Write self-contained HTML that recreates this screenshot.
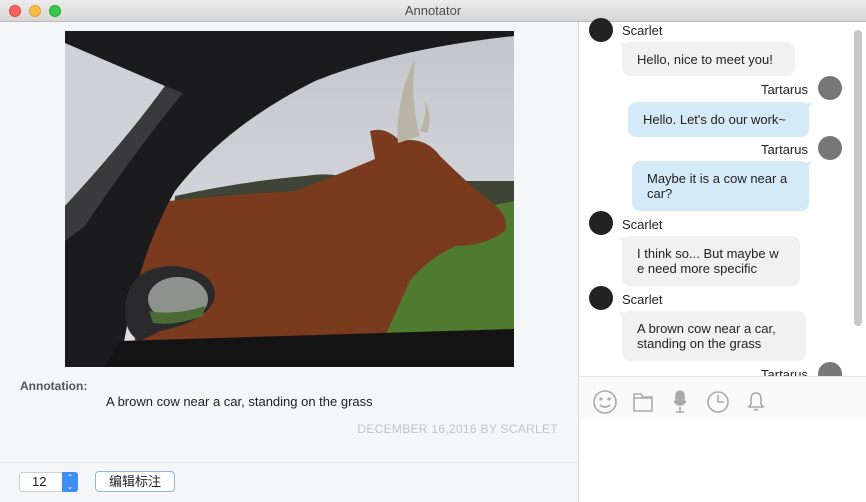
<!DOCTYPE html>
<html><head><meta charset="utf-8"><style>
*{margin:0;padding:0;box-sizing:border-box}
body{width:866px;height:502px;overflow:hidden;font-family:"Liberation Sans","Noto Sans CJK SC",sans-serif;background:#f5f6f8;position:relative;font-size:13px;color:#222}
.tb{position:absolute;left:0;top:0;width:866px;height:22px;background:linear-gradient(#ececec,#d6d6d6);border-bottom:1px solid #b9b9b9;text-align:center;line-height:22px;font-size:13px;color:#4d4d4d}
.dot{position:absolute;top:5px;width:12px;height:12px;border-radius:50%}
.left{position:absolute;left:0;top:22px;width:578px;height:480px;background:#f5f6f8}
.right{position:absolute;left:578px;top:22px;width:288px;height:480px;background:#fff;border-left:1px solid #ddd}
.av{position:absolute;width:24px;height:24px;border-radius:50%}
.nm{position:absolute;font-size:13px;color:#222}
.b{position:absolute;border-radius:8px;padding:0 15px;font-size:13px;line-height:15px;display:flex;align-items:center;word-break:break-all}
.g{background:#f1f1f1}.bl{background:#d4ebf7}
.g::before{content:"";position:absolute;left:-1px;top:-3px;border:5px solid transparent;border-left-color:#f1f1f1;transform:rotate(-30deg)}
.bl::before{content:"";position:absolute;right:-1px;top:-3px;border:5px solid transparent;border-right-color:#d4ebf7;transform:rotate(30deg)}
</style></head><body>
<div class="tb">Annotator
<div class="dot" style="left:9px;background:#fc605c;border:1px solid #de4a43"></div>
<div class="dot" style="left:29px;background:#fdbc40;border:1px solid #dea235"></div>
<div class="dot" style="left:49px;background:#34c84a;border:1px solid #27aa35"></div>
</div>
<div class="left">
<svg style="position:absolute;left:65px;top:9px" width="449" height="336" viewBox="0 0 449 336">
<defs><linearGradient id="sky" x1="0" y1="0" x2="0" y2="1"><stop offset="0" stop-color="#c4c6cc"/><stop offset="1" stop-color="#dfe0e4"/></linearGradient></defs>
<rect width="449" height="336" fill="url(#sky)"/>
<path d="M110 165 Q180 150 240 145 Q270 140 290 150 L449 150 L449 336 L100 336Z" fill="#3e4536"/>
<path d="M300 200 L449 170 L449 300 L300 310Z" fill="#4f7a30"/>
<path d="M60 175 Q140 165 230 160 Q270 145 310 128 L305 100 Q320 95 335 110 Q360 105 375 125 Q400 150 425 170 Q445 185 440 200 Q420 215 390 215 Q360 230 345 250 L320 305 L70 310 Z" fill="#7a3a1e"/>
<path d="M333 112 Q330 70 350 28 Q345 70 355 105Z" fill="#b8b5a6"/>
<path d="M355 100 Q362 85 360 70 Q368 85 362 102Z" fill="#b8b5a6"/>
<path d="M0 0 L449 0 L449 5 Q330 18 250 50 Q160 95 110 160 Q70 230 55 336 L0 336Z" fill="#1b1b1e"/>
<path d="M0 12 L100 55 Q60 110 0 175Z" fill="#cfd1d6"/>
<path d="M100 55 L118 62 Q70 120 20 195 L0 210 L0 175 Q60 110 100 55Z" fill="#3a3a3d"/>
<path d="M62 265 Q70 235 110 235 Q150 240 150 265 Q145 290 95 300 L75 310 Q55 300 62 265Z" fill="#2a2a2c"/>
<ellipse cx="113" cy="268" rx="30" ry="22" fill="#8d928e"/>
<path d="M84 280 Q110 285 140 275 L138 285 Q110 295 88 292Z" fill="#4c6a33"/>
<path d="M40 336 L55 310 L449 298 L449 336Z" fill="#141414"/>
</svg>
<div style="position:absolute;left:20px;top:357px;font-size:12px;font-weight:bold;color:#555">Annotation:</div>
<div style="position:absolute;left:106px;top:372px;font-size:13px">A brown cow near a car, standing on the grass</div>
<div style="position:absolute;right:20px;top:400px;font-size:12px;color:#c4c4c4;letter-spacing:.3px">DECEMBER 16,2016 BY SCARLET</div>
<div style="position:absolute;left:0;top:440px;width:578px;border-top:1px solid #e3e3e3"></div>
<div style="position:absolute;left:19px;top:450px;width:59px;height:20px;background:#fff;border:1px solid #cfcfcf;border-radius:3px;font-size:13px;line-height:18px;padding-left:12px">12
<div style="position:absolute;right:-1px;top:-1px;width:16px;height:20px;background:#3d8ef5;border-radius:0 3px 3px 0;color:#fff;font-size:8px;line-height:9px;text-align:center;padding-top:1px">⌃<br>⌄</div></div>
<div style="position:absolute;left:95px;top:449px;width:80px;height:21px;background:#fff;border:1px solid #8bb3e8;border-radius:4px;font-size:13px;line-height:19px;text-align:center">编辑标注</div>
</div>
<div class="right">
<div style="position:absolute;left:275px;top:8px;width:8px;height:296px;background:#c8c8c8;border-radius:4px"></div>
<div class="av" style="left:10px;top:-4px;background:#222"></div><div class="nm" style="left:43px;top:1px">Scarlet</div>
<div class="b g" style="left:43px;top:20px;width:173px;height:34px">Hello, nice to meet you!</div>
<div class="av" style="left:239px;top:54px;background:#777"></div><div class="nm" style="right:58px;top:60px">Tartarus</div>
<div class="b bl" style="left:49px;top:80px;width:181px;height:35px">Hello. Let's do our work~</div>
<div class="av" style="left:239px;top:114px;background:#777"></div><div class="nm" style="right:58px;top:120px">Tartarus</div>
<div class="b bl" style="left:53px;top:139px;width:177px;height:50px">Maybe it is a cow near a car?</div>
<div class="av" style="left:10px;top:189px;background:#222"></div><div class="nm" style="left:43px;top:195px">Scarlet</div>
<div class="b g" style="left:43px;top:214px;width:178px;height:50px">I think so... But maybe we need more specific</div>
<div class="av" style="left:10px;top:264px;background:#222"></div><div class="nm" style="left:43px;top:270px">Scarlet</div>
<div class="b g" style="left:43px;top:289px;width:184px;height:50px;padding-right:22px">A brown cow near a car, standing on the grass</div>
<div class="av" style="left:239px;top:340px;background:#777"></div><div class="nm" style="right:58px;top:345px">Tartarus</div>
<div style="position:absolute;left:0;top:354px;width:288px;height:44px;background:#fafafa;border-top:1px solid #e3e3e3">
<svg width="288" height="44" fill="none" stroke="#aaa" stroke-width="1.6">
<circle cx="26" cy="25" r="11"/><circle cx="22" cy="22" r=".8" fill="#aaa"/><circle cx="30" cy="22" r=".8" fill="#aaa"/><path d="M21 28 Q26 32 31 28"/>
<path d="M55 17 H62 L64 20 H73 V34 H55Z M55 21 H73"/>
<rect x="97" y="14" width="8" height="14" rx="4" fill="#aaa"/><path d="M95 24 Q101 32 107 24 M101 30 V35 M97 35 H105"/>
<circle cx="139" cy="25" r="10"/><path d="M139 18 V25 H145"/>
<path d="M170 30 H184 L182 27 V22 Q182 16 177 16 Q172 16 172 22 V27Z M175 32 Q177 34 179 32"/>
</svg></div>
</div>
</body></html>
